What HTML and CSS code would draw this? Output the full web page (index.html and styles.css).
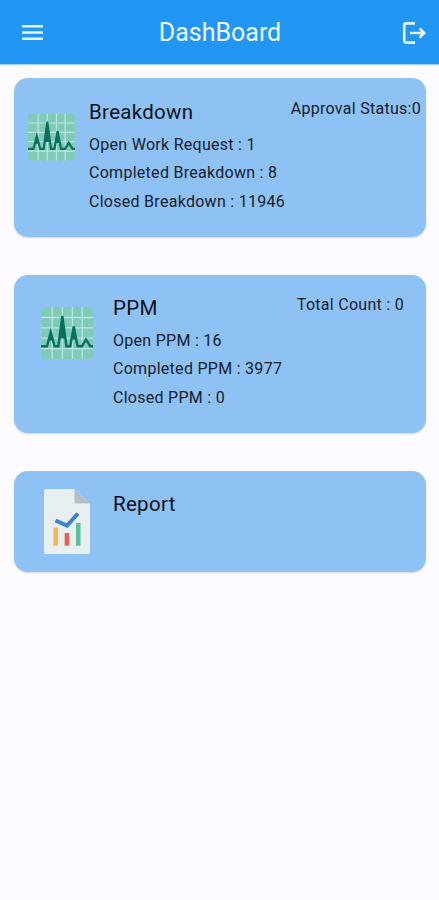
FILE: index.html
```html
<!DOCTYPE html>
<html lang="en">
<head>
  <meta charset="UTF-8" />
  <meta name="viewport" content="width=device-width, initial-scale=1.0" />
  <title>DashBoard</title>
  <link rel="stylesheet" href="styles.css">
</head>
<body>

  <header class="app-bar">
    <svg class="menu-icon" viewBox="0 0 21 15">
      <path d="M0 1.3h21M0 7.5h21M0 13.7h21" />
    </svg>
    <h1>DashBoard</h1>
    <svg class="logout-icon" viewBox="0 0 24 22">
      <path d="M13 1.4H4.2a2 2 0 0 0-2 2v15.2a2 2 0 0 0 2 2H13M8 11h14M17.6 6.4l4.6 4.600-4.600 4.600" />
    </svg>
  </header>

  <main class="cards">
    <section class="card breakdown">
      <svg class="pulse-icon" viewBox="0 0 48 48">
        <rect class="tile" width="48" height="48" rx="4" />
        <path class="grid" d="M10.3 0v48M19.7 0v48M29 0v48M38 0v48M0 9.7h48M0 19.2h48M0 28.8h48M0 38.5h48" />
        <path class="pulse" d="M0 36.2h5.5L9 23l3.500 13.200h3.500L19.700 8.500l3.800 27.700h3.500L30.200 18l3.600 18.200h4L41.500 30l4 6.200H48" />
        <path class="peaks" d="M7 31L9 22l2 9zM17 29l2.700-22 2.700 22zM28 30l2.200-13 2.200 13z" />
      </svg>
      <div class="details">
        <h2>Breakdown</h2>
        <p>Open Work Request : 1</p>
        <p>Completed Breakdown : 8</p>
        <p>Closed Breakdown : 11946</p>
      </div>
      <div class="status">Approval Status:0</div>
    </section>

    <section class="card ppm">
      <svg class="pulse-icon" viewBox="0 0 48 48">
        <rect class="tile" width="48" height="48" rx="4" />
        <path class="grid" d="M10.3 0v48M19.7 0v48M29 0v48M38 0v48M0 9.7h48M0 19.2h48M0 28.8h48M0 38.5h48" />
        <path class="pulse" d="M0 36.2h5.5L9 23l3.500 13.200h3.500L19.700 8.500l3.800 27.700h3.500L30.200 18l3.600 18.200h4L41.500 30l4 6.200H48" />
        <path class="peaks" d="M7 31L9 22l2 9zM17 29l2.700-22 2.700 22zM28 30l2.200-13 2.200 13z" />
      </svg>
      <div class="details">
        <h2>PPM</h2>
        <p>Open PPM : 16</p>
        <p>Completed PPM : 3977</p>
        <p>Closed PPM : 0</p>
      </div>
      <div class="status">Total Count : 0</div>
    </section>

    <section class="card report">
      <svg class="report-icon" viewBox="0 0 46 65">
        <path fill="#e7eff0" d="M2 0h28.5L46 14.5V63a2 2 0 0 1-2 2H2a2 2 0 0 1-2-2V2a2 2 0 0 1 2-2z" />
        <path fill="#b4bfc6" d="M30.5 0L46 14.5H32a1.5 1.5 0 0 1-1.5-1.5z" />
        <path fill="#f6b84e" d="M9.3 38.5H14v18.2H9.3z" />
        <path fill="#ea5f55" d="M20.7 44h4.6v12.7h-4.6z" />
        <path fill="#59c097" d="M32 34h4.5v22.7H32z" />
        <path class="check" d="M11.5 31.5L23 36.5l11-12" />
      </svg>
      <div class="details">
        <h2>Report</h2>
      </div>
    </section>
  </main>

</body>
</html>
```
FILE: styles.css
```css
:root {
  --primary: #2196f3;
  --card: #8ec2f4;
  --page: #fdfbff;
  --text: #15202b;
}

* {
  box-sizing: border-box;
}

body {
  margin: 0;
  min-height: 100vh;
  background: var(--page);
  font-family: Roboto, "Liberation Sans", sans-serif;
  color: var(--text);
}

h1, h2, p {
  margin: 0;
  font-weight: 400;
}

.app-bar {
  height: 64px;
  padding: 0 13px 0 22px;
  display: flex;
  align-items: center;
  background: var(--primary);
  color: #edf8ff;
  box-shadow: 0 1px 1px rgba(33, 150, 243, 0.4);
}

.app-bar h1 {
  flex: 1;
  padding: 1px 1px 0 0;
  font-size: 25px;
  line-height: 30px;
  text-align: center;
}

.app-bar svg {
  fill: none;
  stroke: #e6f5ff;
  stroke-width: 2.6;
}

.app-bar .logout-icon {
  width: 24px;
  height: 22px;
  margin-top: 1px;
}

.menu-icon {
  width: 21px;
  height: 15px;
  margin-right: -4px;
}

.cards {
  padding: 14px 13px 0 14px;
  display: flex;
  flex-direction: column;
  gap: 38px;
}

.card {
  height: 158px;
  display: flex;
  align-items: flex-start;
  background: var(--card);
  border-radius: 14px;
  box-shadow: 0 1px 2px rgba(0, 0, 0, 0.15);
}

.breakdown {
  height: 159px;
  padding: 21px 5px 0 14px;
}

.ppm {
  padding: 20px 22px 0 27px;
}

.report {
  height: 101px;
  padding: 18px 22px 0 30px;
}

.details {
  flex: 1;
  white-space: nowrap;
}

.details h2 {
  margin-bottom: 6px;
  font-size: 20.5px;
  line-height: 26px;
  letter-spacing: 0.3px;
  color: #0b1118;
}

.details p {
  font-size: 16px;
  line-height: 28.4px;
  letter-spacing: 0.28px;
}

.status {
  font-size: 16px;
  line-height: 20px;
  letter-spacing: 0.28px;
}

.pulse-icon {
  flex: none;
  width: 47px;
  height: 48px;
  margin: 14px 14px 0 0;
}

.ppm .pulse-icon {
  width: 52px;
  height: 52px;
  margin: 12px 20px 0 0;
}

.tile {
  fill: #80cbb8;
}

.grid {
  fill: none;
  stroke: #b9e6e4;
  stroke-width: 1.2;
}

.pulse {
  fill: none;
  stroke: #08705f;
  stroke-width: 2.2;
}

.peaks {
  fill: #08705f;
}

.report-icon {
  flex: none;
  width: 46px;
  height: 65px;
  margin-right: 23px;
}

.report .details {
  padding-top: 2px;
}

.check {
  fill: none;
  stroke: #3d83d5;
  stroke-width: 4;
}
```
